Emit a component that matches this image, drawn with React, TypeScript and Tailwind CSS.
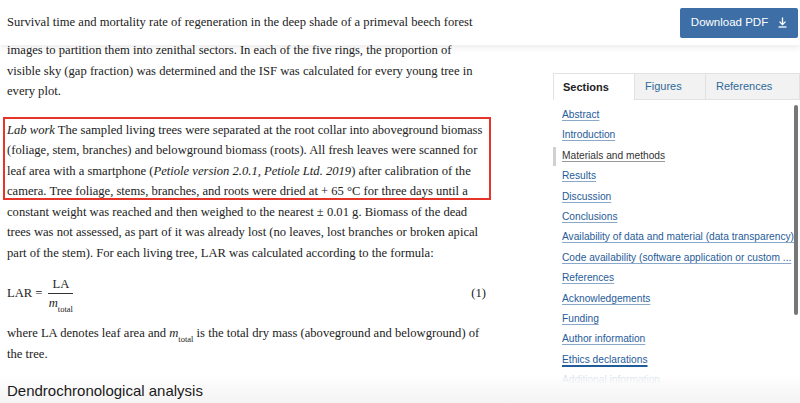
import React from "react";

const serif = { fontFamily: '"Liberation Serif", "Times New Roman", serif' };
const sans = { fontFamily: '"Liberation Sans", Arial, sans-serif' };

const sections = [
  "Abstract",
  "Introduction",
  "Materials and methods",
  "Results",
  "Discussion",
  "Conclusions",
  "Availability of data and material (data transparency)",
  "Code availability (software application or custom ...",
  "References",
  "Acknowledgements",
  "Funding",
  "Author information",
  "Ethics declarations",
  "Additional information",
];

function DownloadIcon() {
  return (
    <svg width="9" height="11" viewBox="0 0 9 11" fill="none" stroke="currentColor" strokeWidth="1.3">
      <path d="M4.5 0.5v7" />
      <path d="M1.5 4.6 4.5 7.5l3-2.9" />
      <path d="M0.5 10h8" />
    </svg>
  );
}

function MTotal() {
  return (
    <span className="whitespace-nowrap">
      <i>m</i>
      <sub className="text-[8.5px] align-[-3px]">total</sub>
    </span>
  );
}

export default function App() {
  return (
    <div className="relative w-[800px] h-[403px] overflow-hidden bg-white text-[#222]">
      {/* sticky header */}
      <header className="absolute inset-x-0 top-0 z-20 h-[45px] bg-white flex items-center justify-between shadow-[0_3px_6px_rgba(0,0,0,0.07)]">
        <h1 className="pl-[7px] text-[12.6px] font-normal whitespace-nowrap" style={serif}>
          Survival time and mortality rate of regeneration in the deep shade of a primeval beech forest
        </h1>
        <button
          className="mr-[2px] h-[30px] w-[118px] flex items-center justify-center gap-[10px] rounded-[2px] bg-[#3d6fa6] text-white text-[11.5px]"
          style={sans}
        >
          Download PDF
          <DownloadIcon />
        </button>
      </header>

      <div className="flex">
        {/* article body */}
        <article className="w-[553px] shrink-0 pl-[7px] pt-[40px] text-[12.6px] leading-[20.5px] whitespace-nowrap" style={serif}>
          <p className="mb-[18px]">
            images to partition them into zenithal sectors. In each of the five rings, the proportion of
            <br />
            visible sky (gap fraction) was determined and the ISF was calculated for every young tree in
            <br />
            every plot.
          </p>
          <p>
            <i>Lab work</i> The sampled living trees were separated at the root collar into aboveground biomass
            <br />
            (foliage, stem, branches) and belowground biomass (roots). All fresh leaves were scanned for
            <br />
            leaf area with a smartphone (<i>Petiole version 2.0.1, Petiole Ltd. 2019</i>) after calibration of the
            <br />
            camera. Tree foliage, stems, branches, and roots were dried at + 65 °C for three days until a
            <br />
            constant weight was reached and then weighed to the nearest ± 0.01 g. Biomass of the dead
            <br />
            trees was not assessed, as part of it was already lost (no leaves, lost branches or broken apical
            <br />
            part of the stem). For each living tree, LAR was calculated according to the formula:
          </p>

          <div className="mt-[8px] h-[44px] w-[479px] flex items-center justify-between">
            <div className="flex items-center gap-[6px]">
              <span>LAR =</span>
              <span className="flex flex-col items-center leading-[18px]">
                <span className="px-[4px] border-b border-[#333]">LA</span>
                <MTotal />
              </span>
            </div>
            <span>(1)</span>
          </div>

          <p className="mt-[8px]">
            where LA denotes leaf area and <MTotal /> is the total dry mass (aboveground and belowground) of
            <br />
            the tree.
          </p>

          <h2 className="relative z-10 mt-[17px] text-[15px] leading-[20px] text-[#1a1a1a]" style={sans}>
            Dendrochronological analysis
          </h2>
        </article>

        {/* sidebar */}
        <aside className="flex-1 min-w-0 pt-[73px]" style={sans}>
          <div className="flex h-[27px] text-[11px]">
            <div className="w-[81px] flex items-center pl-[9px] bg-white border-t border-l border-[#e2e2e2] font-bold text-[#222]">
              Sections
            </div>
            <div className="w-[72px] flex items-center pl-[10px] bg-[#f2f2f2] border border-[#e2e2e2] text-[#2f6a98]">
              Figures
            </div>
            <div className="flex-1 flex items-center pl-[10px] bg-[#f2f2f2] border border-l-0 border-[#e2e2e2] text-[#2f6a98]">
              References
            </div>
          </div>
          <ul className="relative h-[285px] overflow-hidden pt-[5px] text-[10.2px] leading-[20.4px]">
            {sections.map((s) => {
              const active = s === "Materials and methods";
              const hovered = s === "Ethics declarations";
              return (
                <li key={s} className={`relative pl-[9px] whitespace-nowrap ${active ? "text-[#333]" : "text-[#1f5c99]"}`}>
                  {active && <span className="absolute left-0 top-[1px] h-[19px] w-[3px] bg-[#d0d0d0]" />}
                  <span
                    className={`underline underline-offset-2 ${
                      hovered ? "decoration-2 decoration-[#1f5c99]" : active ? "decoration-[#999]" : "decoration-[#8aa9c9]"
                    }`}
                  >
                    {s}
                  </span>
                </li>
              );
            })}
            <div className="absolute inset-x-0 bottom-0 h-[18px] bg-linear-to-b from-white/60 to-white" />
          </ul>
        </aside>
      </div>

      {/* sidebar scrollbar */}
      <div className="absolute left-[794px] top-[105px] h-[210px] w-[4px] rounded-full bg-[#777]" />

      {/* annotation box */}
      <div className="absolute left-[3px] top-[117px] w-[488px] h-[83px] border-2 border-[#e5342a] pointer-events-none" />

      {/* bottom fade */}
      <div className="absolute inset-x-0 bottom-0 h-[28px] bg-linear-to-b from-white/0 to-[#eeeeee]/70 pointer-events-none" />
    </div>
  );
}
